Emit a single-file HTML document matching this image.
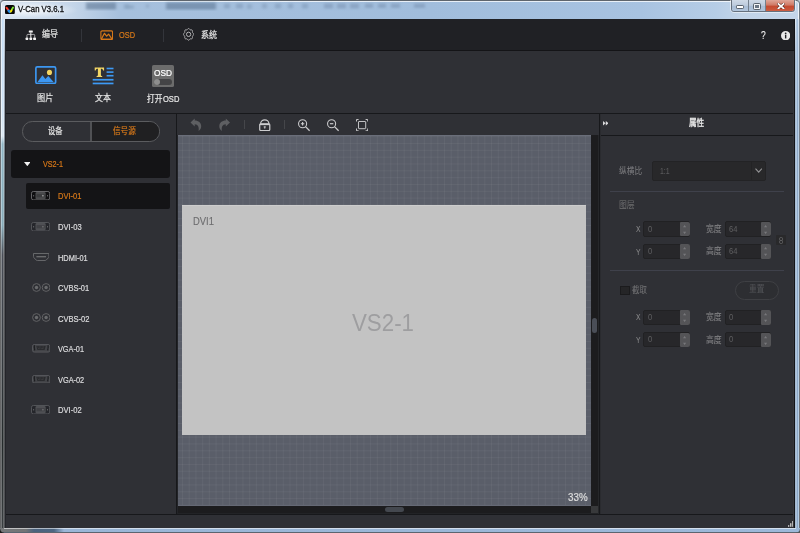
<!DOCTYPE html>
<html lang="zh"><head><meta charset="utf-8"><title>V-Can V3.6.1</title>
<style>
html,body{margin:0;padding:0}
body{width:800px;height:533px;overflow:hidden;position:relative;background:#c6d1db;font-family:"Liberation Sans",sans-serif}
.b,.t,.ic,.cj{position:absolute;display:block}
.t{white-space:nowrap;transform-origin:0 50%;-webkit-text-stroke:.22px currentColor}
.cj{overflow:visible}
.zh{font-family:"Liberation Sans","Noto Sans CJK SC",sans-serif}
#frame{position:absolute;left:0;top:0;width:800px;height:533px;box-sizing:border-box;border:1px solid #6f7780;border-top-color:#5e656d;border-radius:4px 4px 4px 4px;
 background:linear-gradient(90deg,#d9e4f0 0px,#c5d6e9 70px,#a6c0dd 120px,#a1bddc 430px,#a8c3e1 640px,#b6cde6 715px,#c2d4e8 740px,#c4d5e9 800px);
 box-shadow:inset 0 0 0 1px rgba(255,255,255,.75)}
#glow{position:absolute;left:2px;top:2px;width:75px;height:16px;background:radial-gradient(ellipse at 40% 50%,rgba(255,255,255,.85),rgba(255,255,255,0) 72%)}
#client{position:absolute;left:5px;top:19px;width:790px;height:508.5px;background:#2f3035}
#capbtns{position:absolute;left:731px;top:0;width:64px;height:12.4px;border:1px solid #66717e;border-top:none;border-radius:0 0 3.5px 3.5px;box-sizing:border-box;overflow:hidden;
 box-shadow:0 0 0 1px rgba(255,255,255,.5)}
.cb{position:absolute;top:0;height:12px}
.mn{left:0;width:16.4px;background:linear-gradient(#cfdae7,#bccbdd 45%,#a9bdd5 52%,#b3c7de);border-right:1px solid #73808e}
.mx{left:17.4px;width:15.6px;background:linear-gradient(#cfdae7,#bccbdd 45%,#a9bdd5 52%,#b3c7de);border-right:1px solid #73808e}
.cl{left:34px;width:29px;background:linear-gradient(#dfa698,#d07a66 42%,#c44a30 52%,#c9553a 80%,#d0694f)}
.mn i{position:absolute;left:4.6px;top:6.1px;width:6.6px;height:2px;background:#fff;border:1px solid #59636e;border-radius:1.2px;box-sizing:content-box;margin:-1px}
.mx i{position:absolute;left:4.6px;top:4.4px;width:6px;height:4.2px;border:1.3px solid #f4f6f8;outline:1px solid #59636e;background:#6b7785;box-sizing:border-box;border-radius:.6px}
.grid{background-color:#5a5e69;
 background-image:linear-gradient(90deg,rgba(255,255,255,.045) 0,rgba(255,255,255,.045) 1px,transparent 1px),linear-gradient(180deg,rgba(255,255,255,.045) 0,rgba(255,255,255,.045) 1px,transparent 1px);
 background-size:6.727px 100%,100% 6.83px;background-position:4px 0,0 1.2px;box-shadow:inset 0 1px 0 #6a6e7a, inset 0 -1px 0 #656975}
</style></head>
<body>
<div id="frame"></div>
<div class="b" style="left:0px;top:19px;width:1px;height:509px;background:linear-gradient(180deg,#7c848d 0px,#6d7074 121px,#6a6b6c 281px,#636465 509px)"></div>
<div class="b" style="left:1px;top:19px;width:1px;height:509px;background:linear-gradient(180deg,#e8f0f8 0px,#eef5fb 117px,#b8d3df 125px,#b2cbd6 206px,#8a8d92 236px,#6f7273 425px,#747678 509px)"></div>
<div class="b" style="left:2px;top:19px;width:1px;height:509px;background:linear-gradient(180deg,#c6def6 0px,#cfe3f6 91px,#dce8f3 117px,#8fb4c4 125px,#88abb9 206px,#4a4e57 236px,#252a2b 425px,#3a3e40 509px)"></div>
<div class="b" style="left:3px;top:19px;width:1px;height:509px;background:linear-gradient(180deg,#cde2f7 0px,#dbe9f6 91px,#e6f0f8 117px,#a9c5d0 125px,#a0bcc6 206px,#77797e 236px,#5e6263 425px,#66696b 509px)"></div>
<div class="b" style="left:4px;top:19px;width:1px;height:509px;background:linear-gradient(180deg,#dfe9f3 0px,#a8b2be 41px,#8a939e 117px,#7d8790 125px,#555659 236px,#505154 509px)"></div>
<div class="b" style="left:795px;top:19px;width:1px;height:509px;background:linear-gradient(180deg,#dde7f1 0px,#a9bdd3 41px,#a3b8cf 509px)"></div>
<div class="b" style="left:796px;top:19px;width:1px;height:509px;background:linear-gradient(180deg,#b6cce4 0px,#a9c0d9 509px)"></div>
<div class="b" style="left:797px;top:19px;width:1px;height:509px;background:linear-gradient(180deg,#a7c0dc 0px,#8ea9c8 101px,#8aa6c6 509px)"></div>
<div class="b" style="left:798px;top:19px;width:1px;height:509px;background:linear-gradient(180deg,#d8e4f1 0px,#b9cfe6 81px,#b3cce4 509px)"></div>
<div class="b" style="left:799px;top:19px;width:1px;height:509px;background:linear-gradient(180deg,#77818c 0px,#6d6f73 509px)"></div>
<div class="b" style="left:0;top:527.5px;width:800px;height:5.5px;background:linear-gradient(90deg,#77797b 0,#727476 26px,#4b627d 34px,#4d6682 54px,#9ab6d7 64px,#9cb8d9 100%)"></div>
<div class="b" style="left:4px;top:527.5px;width:792px;height:1px;background:rgba(255,255,255,.55)"></div>
<div class="b" style="left:0;top:532px;width:800px;height:1px;background:#5b6570"></div>
<div class="b" style="left:0;top:529px;width:4px;height:4px;background:radial-gradient(circle at 100% 0,rgba(30,30,30,0) 3.2px,#1c1c1c 4.2px)"></div>
<div class="b" style="left:796px;top:529px;width:4px;height:4px;background:radial-gradient(circle at 0 0,rgba(80,80,80,0) 3.2px,#55585c 4.2px)"></div>
<div id="glow"></div>
<svg class="ic" style="left:0;top:0;width:800px;height:19px" viewBox="0 0 800 19"><defs><filter id="bl" x="-5%%" y="-50%%" width="110%%" height="200%%"><feGaussianBlur stdDeviation="1.6 1.1"/></filter></defs><g fill="#5d7795" filter="url(#bl)"><rect x="86" y="2.5" width="30" height="7" opacity="0.62"/><rect x="124" y="4" width="5" height="5" opacity="0.3"/><rect x="128" y="5" width="6" height="4" opacity="0.25"/><rect x="146" y="4" width="3" height="4" opacity="0.25"/><rect x="166" y="2.5" width="50" height="7" opacity="0.6"/><rect x="224" y="3.5" width="6" height="5" opacity="0.3"/><rect x="236" y="3.5" width="7" height="5" opacity="0.3"/><rect x="247" y="4" width="5" height="5" opacity="0.25"/><rect x="262" y="3.5" width="5" height="5" opacity="0.28"/><rect x="275" y="3.5" width="6" height="5" opacity="0.3"/><rect x="288" y="3.5" width="5" height="5" opacity="0.3"/><rect x="302" y="3.5" width="6" height="5" opacity="0.3"/><rect x="324" y="3.5" width="9" height="5" opacity="0.33"/><rect x="337" y="3.5" width="9" height="5" opacity="0.33"/><rect x="350" y="3.5" width="9" height="5" opacity="0.33"/><rect x="365" y="3.5" width="8" height="4.5" opacity="0.33"/><rect x="378" y="3.5" width="8" height="4.5" opacity="0.33"/><rect x="391" y="3.5" width="9" height="4.5" opacity="0.33"/><rect x="414" y="3.5" width="11" height="4.5" opacity="0.33"/></g></svg>
<svg class="ic" style="left:5.2px;top:4.6px;width:9.8px;height:9.4px" viewBox="0 0 10 10" preserveAspectRatio="none"><rect x="0" y="0" width="10" height="10" rx="1.9" fill="#070708"/><path d="M1.5 2.8 L3.5 5.4" stroke="#ff3a26" stroke-width="2" stroke-linecap="round"/><path d="M3.7 6 L4.9 7.4" stroke="#1f8df0" stroke-width="2.5" stroke-linecap="round"/><path d="M6.9 4.9 L8.2 2.7" stroke="#7ee838" stroke-width="1.9" stroke-linecap="round"/><path d="M5.9 7 L6.6 5.8" stroke="#f3e500" stroke-width="2.1" stroke-linecap="round"/></svg>
<span class="t" style="left:18.00px;top:3.71px;font-size:9.20px;line-height:11px;color:#101215;transform:scaleX(0.8406);-webkit-text-stroke:.35px #101215;">V-Can V3.6.1</span>
<div id="capbtns"><div class="cb mn"><i></i></div><div class="cb mx"><i></i></div><div class="cb cl"><svg viewBox="0 0 10 8" style="position:absolute;left:10.6px;top:2.7px;width:8px;height:6.4px"><path d="M1.8 1.2 L8.2 6.8 M8.2 1.2 L1.8 6.8" stroke="#5a2a22" stroke-width="3.6" stroke-linecap="square"/><path d="M1.8 1.2 L8.2 6.8 M8.2 1.2 L1.8 6.8" stroke="#fff" stroke-width="2.2" stroke-linecap="square"/></svg></div></div>
<div id="client">
</div>
<div class="b nav" style="left:5.00px;top:19.00px;width:790.00px;height:32.00px;background:#202125;border-bottom:1px solid #141417;box-sizing:border-box"></div>
<svg class="ic" style="left:25px;top:29.5px;width:12px;height:10.5px" viewBox="0 0 12 10.5" fill="#f4f4f4"><path d="M1.95 7.6 V5.3 Q1.95 4.4 2.85 4.4 H8.8 Q9.7 4.4 9.7 5.3 V7.6" fill="none" stroke="#b9b9bb" stroke-width=".9"/><rect x="3.8" y=".5" width="4" height="2" rx=".5"/><rect x="5.35" y="2.3" width=".95" height="5.4"/><rect x=".6" y="7.5" width="2.6" height="2.6" rx=".7"/><rect x="4.5" y="7.5" width="2.6" height="2.6" rx=".7"/><rect x="8.2" y="7.5" width="2.8" height="2.6" rx=".7"/></svg>
<span class="t zh" style="left:42.30px;top:30.40px;font-size:9.11px;line-height:9.11px;color:#e6e6e6;transform:scaleX(0.875);-webkit-text-stroke:.2px currentColor;">编导</span>
<div class="b" style="left:81.00px;top:28.50px;width:1.00px;height:13.00px;background:#33353b"></div>
<svg class="ic" style="left:99.6px;top:29.5px;width:13.4px;height:10.5px" viewBox="0 0 13.5 11" preserveAspectRatio="none" fill="none" stroke="#d67819"><rect x=".9" y=".9" width="11.7" height="9.2" rx="1.2" stroke-width="1.1"/><path d="M1.4 9.4 L4.5 3.5 L6.7 6.5 L8.7 4.3 L12.1 9.4" stroke-width="1.25" stroke-linejoin="round"/><path d="M1.5 9.6 H12" stroke-width="1.3"/></svg>
<span class="t" style="left:119.30px;top:29.82px;font-size:8.90px;line-height:11px;color:#d67819;transform:scaleX(0.8296);">OSD</span>
<div class="b" style="left:163.00px;top:28.50px;width:1.00px;height:13.00px;background:#33353b"></div>
<svg class="ic" style="left:183px;top:28.45px;width:11.2px;height:12.7px" viewBox="-6 -6.7 12 13.4" preserveAspectRatio="none" fill="none" stroke="#b4b4b6" stroke-width="1.05"><path d="M0.00 -6.21 L0.35 -6.13 L0.68 -5.91 L0.98 -5.59 L1.24 -5.26 L1.48 -4.98 L1.74 -4.79 L2.04 -4.71 L2.39 -4.71 L2.78 -4.74 L3.18 -4.73 L3.55 -4.62 L3.85 -4.39 L4.05 -4.05 L4.15 -3.63 L4.16 -3.17 L4.14 -2.72 L4.13 -2.32 L4.20 -1.98 L4.37 -1.69 L4.61 -1.41 L4.90 -1.11 L5.18 -0.78 L5.38 -0.40 L5.45 -0.00 L5.38 0.40 L5.18 0.78 L4.90 1.11 L4.61 1.41 L4.37 1.69 L4.20 1.98 L4.13 2.32 L4.14 2.72 L4.16 3.17 L4.15 3.63 L4.05 4.05 L3.85 4.39 L3.55 4.62 L3.18 4.73 L2.78 4.74 L2.39 4.71 L2.04 4.71 L1.74 4.79 L1.48 4.98 L1.24 5.26 L0.98 5.59 L0.68 5.91 L0.35 6.13 L0.00 6.21 L-0.35 6.13 L-0.68 5.91 L-0.98 5.59 L-1.24 5.26 L-1.48 4.98 L-1.74 4.79 L-2.04 4.71 L-2.39 4.71 L-2.78 4.74 L-3.18 4.73 L-3.55 4.62 L-3.85 4.39 L-4.05 4.05 L-4.15 3.63 L-4.16 3.17 L-4.14 2.72 L-4.13 2.32 L-4.20 1.98 L-4.37 1.69 L-4.61 1.41 L-4.90 1.11 L-5.18 0.78 L-5.38 0.40 L-5.45 0.00 L-5.38 -0.40 L-5.18 -0.78 L-4.90 -1.11 L-4.61 -1.41 L-4.37 -1.69 L-4.20 -1.98 L-4.13 -2.32 L-4.14 -2.72 L-4.16 -3.17 L-4.15 -3.63 L-4.05 -4.05 L-3.85 -4.39 L-3.55 -4.62 L-3.18 -4.73 L-2.78 -4.74 L-2.39 -4.71 L-2.04 -4.71 L-1.74 -4.79 L-1.48 -4.98 L-1.24 -5.26 L-0.98 -5.59 L-0.68 -5.91 L-0.35 -6.13 Z" stroke-linejoin="round"/><circle r="2.3"/></svg>
<span class="t zh" style="left:200.60px;top:30.50px;font-size:9.12px;line-height:9.12px;color:#e6e6e6;transform:scaleX(0.883);-webkit-text-stroke:.2px currentColor;">系统</span>
<span class="t" style="left:761.20px;top:29.80px;font-size:10.40px;line-height:12px;color:#efefef;transform:scaleX(0.8126);-webkit-text-stroke:.12px;">?</span>
<svg class="ic" style="left:780.5px;top:30.7px;width:9.3px;height:9.3px" viewBox="0 0 10 10"><circle cx="5" cy="5" r="5" fill="#e9e9e9"/><rect x="4.25" y="4" width="1.5" height="4" fill="#202125"/><circle cx="5" cy="2.5" r=".95" fill="#202125"/></svg>
<div class="b" style="left:5.00px;top:51.00px;width:790.00px;height:63.00px;background:#2f3035;border-bottom:1px solid #17181b;box-sizing:border-box"></div>
<svg class="ic" style="left:35px;top:66.2px;width:21.5px;height:18.3px" viewBox="0 0 22 18.6" preserveAspectRatio="none"><rect x=".9" y=".9" width="20.2" height="16.8" rx="1.4" fill="none" stroke="#3c97f2" stroke-width="1.7"/><circle cx="14.8" cy="6.5" r="2.6" fill="#f3d460"/><path d="M2.6 16.2 L7.6 9.3 L10.6 13.2 L13.6 10.2 L19 16.2 Z" fill="#3c97f2"/></svg>
<span class="t zh" style="left:37.10px;top:93.50px;font-size:9.01px;line-height:9.01px;color:#e6e6e6;transform:scaleX(0.903);-webkit-text-stroke:.2px currentColor;">图片</span>
<svg class="ic" style="left:92.4px;top:66.8px;width:22px;height:18px" viewBox="0 0 22 18"><g fill="#3d9af5"><rect x="14.6" y=".7" width="6.9" height="1.6"/><rect x="14.6" y="4.3" width="6.9" height="1.6"/><rect x="14.6" y="7.9" width="6.9" height="1.6"/><rect x=".7" y="11.9" width="20.8" height="1.7"/><rect x=".7" y="15.6" width="20.8" height="1.7"/></g><path fill="#f3d665" transform="translate(.5 0)" d="M2.2 .4 H11.6 V3.6 H10.6 C10.4 2.4 10 1.8 8.4 1.8 V7.9 C8.4 8.7 8.8 8.9 9.7 9 V10 H4.1 V9 C5 8.9 5.4 8.7 5.4 7.9 V1.8 C3.8 1.8 3.4 2.4 3.2 3.6 H2.2 Z"/></svg>
<span class="t zh" style="left:95.20px;top:94.40px;font-size:8.85px;line-height:8.85px;color:#e6e6e6;transform:scaleX(0.896);-webkit-text-stroke:.2px currentColor;">文本</span>
<div class="b" style="left:152px;top:64.8px;width:22px;height:21.9px;background:#6c6c6c;border-radius:1.6px"></div>
<span class="t" style="left:153.90px;top:68.19px;font-size:8.70px;line-height:10px;color:#ffffff;transform:scaleX(0.9547);">OSD</span>
<div class="b" style="left:153.6px;top:78.7px;width:18.9px;height:6.6px;background:#444446;border-radius:3.3px"></div>
<div class="b" style="left:153.8px;top:78.9px;width:6.2px;height:6.2px;background:#8e8e8e;border-radius:50%"></div>
<span class="t zh" style="left:146.90px;top:94.50px;font-size:8.98px;line-height:8.98px;color:#e6e6e6;transform:scaleX(0.863);-webkit-text-stroke:.2px currentColor;">打开</span>
<span class="t" style="left:162.50px;top:94.42px;font-size:8.90px;line-height:11px;color:#e6e6e6;transform:scaleX(0.8503);">OSD</span>
<div class="b" style="left:5.00px;top:114.00px;width:171.00px;height:400.00px;background:#2f3035"></div>
<div class="b" style="left:176.00px;top:114.00px;width:1.00px;height:400.00px;background:#17181b"></div>
<div class="b" style="left:22px;top:121px;width:137.5px;height:20.5px;border:1px solid #5b5c5f;border-radius:10.25px;box-sizing:border-box;overflow:hidden;background:#2f3035"><div style="position:absolute;left:67px;top:0;width:2px;height:20px;background:#505154"></div><div style="position:absolute;left:69px;top:0;width:70px;height:20px;background:#202022"></div></div>
<span class="t zh" style="left:48.40px;top:127.20px;font-size:8.86px;line-height:8.86px;color:#e6e6e6;transform:scaleX(0.819);-webkit-text-stroke:.2px currentColor;">设备</span>
<span class="t zh" style="left:113.00px;top:127.25px;font-size:8.78px;line-height:8.78px;color:#d67819;transform:scaleX(0.869);-webkit-text-stroke:.2px currentColor;">信号源</span>
<div class="b" style="left:11.30px;top:149.50px;width:158.40px;height:28.60px;background:#141416;border-radius:3px"></div>
<svg class="ic" style="left:23.6px;top:161.8px;width:6.6px;height:4.2px" viewBox="0 0 6.6 4.2"><path d="M0 0 H6.6 L3.3 4.2 Z" fill="#f2f2f2"/></svg>
<span class="t" style="left:42.50px;top:158.52px;font-size:8.90px;line-height:11px;color:#d67819;transform:scaleX(0.8085);">VS2-1</span>
<div class="b" style="left:26.30px;top:183.20px;width:143.40px;height:25.50px;background:#141416;border-radius:2px"></div>
<svg class="ic" style="left:30.8px;top:190.80px;width:19.2px;height:9.4px" viewBox="0 0 19.2 9.4"><rect x=".5" y=".5" width="18.2" height="8.4" rx="1.8" fill="#0e0e10" stroke="#707173" stroke-width=".9"/><rect x="4.5" y="1" width="10.2" height="7.4" rx="1.4" fill="#4a4b4d"/><rect x="5.5" y="3.1" width="8.2" height="3.2" fill="#3a3b3d"/><circle cx="11.9" cy="4.7" r=".85" fill="#9a9b9d"/><rect x="2.2" y="4.1" width=".9" height="1.3" fill="#707173"/><rect x="16.1" y="4.1" width=".9" height="1.3" fill="#707173"/></svg>
<span class="t" style="left:57.80px;top:191.28px;font-size:9.00px;line-height:11px;color:#d67819;transform:scaleX(0.8354);">DVI-01</span>
<svg class="ic" style="left:30.8px;top:221.60px;width:19.2px;height:9.4px" viewBox="0 0 19.2 9.4"><rect x=".5" y=".5" width="18.2" height="8.4" rx="1.8" fill="#25262b" stroke="#58595d" stroke-width=".9"/><rect x="4.5" y="1" width="10.2" height="7.4" rx="1.4" fill="#4f5054"/><rect x="5.5" y="3.1" width="8.2" height="3.2" fill="#404145"/><circle cx="11.9" cy="4.7" r=".85" fill="#6c6d70"/><rect x="2.2" y="4.1" width=".9" height="1.3" fill="#707173"/><rect x="16.1" y="4.1" width=".9" height="1.3" fill="#707173"/></svg>
<span class="t" style="left:57.80px;top:221.88px;font-size:9.00px;line-height:11px;color:#dadadc;transform:scaleX(0.8425);">DVI-03</span>
<svg class="ic" style="left:32.8px;top:252.80px;width:16.4px;height:8px" viewBox="0 0 16.4 8" fill="none" stroke="#6d6e70"><path d="M.5 .5 H15.9 V3.6 Q15.9 4.4 15.2 5 L13.4 6.9 Q12.8 7.5 12 7.5 H4.4 Q3.6 7.5 3 6.9 L1.2 5 Q.5 4.4 .5 3.6 Z" stroke-width=".9"/><path d="M3.4 3.7 H13" stroke-width="1.3"/></svg>
<span class="t" style="left:57.80px;top:252.58px;font-size:9.00px;line-height:11px;color:#dadadc;transform:scaleX(0.8249);">HDMI-01</span>
<svg class="ic" style="left:31.8px;top:282.90px;width:18.6px;height:9px" viewBox="0 0 18.6 9" fill="none" stroke="#666769"><circle cx="4.5" cy="4.5" r="3.9" stroke-width=".9"/><circle cx="14.1" cy="4.5" r="3.9" stroke-width=".9"/><circle cx="4.5" cy="4.5" r="1.7" fill="#6a6b6d" stroke="none"/><circle cx="14.1" cy="4.5" r="1.7" fill="#6a6b6d" stroke="none"/></svg>
<span class="t" style="left:57.80px;top:283.08px;font-size:9.00px;line-height:11px;color:#dadadc;transform:scaleX(0.8316);">CVBS-01</span>
<svg class="ic" style="left:31.8px;top:313.40px;width:18.6px;height:9px" viewBox="0 0 18.6 9" fill="none" stroke="#666769"><circle cx="4.5" cy="4.5" r="3.9" stroke-width=".9"/><circle cx="14.1" cy="4.5" r="3.9" stroke-width=".9"/><circle cx="4.5" cy="4.5" r="1.7" fill="#6a6b6d" stroke="none"/><circle cx="14.1" cy="4.5" r="1.7" fill="#6a6b6d" stroke="none"/></svg>
<span class="t" style="left:57.80px;top:313.58px;font-size:9.00px;line-height:11px;color:#dadadc;transform:scaleX(0.8369);">CVBS-02</span>
<svg class="ic" style="left:31.6px;top:344.00px;width:18.4px;height:8.6px" viewBox="0 0 18.4 8.6"><rect x=".5" y=".5" width="17.4" height="7.6" rx="1.7" fill="#434448" stroke="#58595d" stroke-width=".9"/><path d="M4.3 1.9 H13.7 L12.6 5.9 H5.4 Z" fill="#2a2b2e"/><path d="M5.6 3 H12.4 M6 4.6 H12" stroke="#4a4b4f" stroke-width=".7" stroke-dasharray=".8 .6"/><path d="M2.3 1.7 V3.9 M2.6 4.9 V5.9 M16.1 1.7 V3.9 M15.8 4.9 V5.9" stroke="#1c1d20" stroke-width="1.2" stroke-linecap="round"/></svg>
<span class="t" style="left:57.80px;top:344.08px;font-size:9.00px;line-height:11px;color:#dadadc;transform:scaleX(0.8121);">VGA-01</span>
<svg class="ic" style="left:31.6px;top:374.50px;width:18.4px;height:8.6px" viewBox="0 0 18.4 8.6"><rect x=".5" y=".5" width="17.4" height="7.6" rx="1.7" fill="#434448" stroke="#58595d" stroke-width=".9"/><path d="M4.3 1.9 H13.7 L12.6 5.9 H5.4 Z" fill="#2a2b2e"/><path d="M5.6 3 H12.4 M6 4.6 H12" stroke="#4a4b4f" stroke-width=".7" stroke-dasharray=".8 .6"/><path d="M2.3 1.7 V3.9 M2.6 4.9 V5.9 M16.1 1.7 V3.9 M15.8 4.9 V5.9" stroke="#1c1d20" stroke-width="1.2" stroke-linecap="round"/></svg>
<span class="t" style="left:57.80px;top:374.58px;font-size:9.00px;line-height:11px;color:#dadadc;transform:scaleX(0.8184);">VGA-02</span>
<svg class="ic" style="left:30.8px;top:404.80px;width:19.2px;height:9.4px" viewBox="0 0 19.2 9.4"><rect x=".5" y=".5" width="18.2" height="8.4" rx="1.8" fill="#25262b" stroke="#58595d" stroke-width=".9"/><rect x="4.5" y="1" width="10.2" height="7.4" rx="1.4" fill="#4f5054"/><rect x="5.5" y="3.1" width="8.2" height="3.2" fill="#404145"/><circle cx="11.9" cy="4.7" r=".85" fill="#6c6d70"/><rect x="2.2" y="4.1" width=".9" height="1.3" fill="#707173"/><rect x="16.1" y="4.1" width=".9" height="1.3" fill="#707173"/></svg>
<span class="t" style="left:57.80px;top:405.08px;font-size:9.00px;line-height:11px;color:#dadadc;transform:scaleX(0.8425);">DVI-02</span>
<div class="b" style="left:177.00px;top:114.00px;width:422.00px;height:21.00px;background:#2f3035"></div>
<div class="b" style="left:177.00px;top:135.00px;width:1.00px;height:379.00px;background:#232428"></div>
<div class="b grid" style="left:178.00px;top:135.00px;width:413.00px;height:371.00px;"></div>
<div class="b" style="left:591.00px;top:135.00px;width:7.00px;height:371.00px;background:#1c1c1e"></div>
<div class="b" style="left:178.00px;top:506.00px;width:413.00px;height:7.30px;background:#1c1c1e"></div>
<div class="b" style="left:591.00px;top:506.00px;width:7.00px;height:7.30px;background:#38393b"></div>
<div class="b" style="left:177.00px;top:513.30px;width:422.00px;height:1.70px;background:#222326"></div>
<div class="b" style="left:598.00px;top:135.00px;width:1.00px;height:379.00px;background:#26272a"></div>
<div class="b" style="left:599.00px;top:114.00px;width:1.00px;height:400.00px;background:#17181b"></div>
<div class="b" style="left:591.80px;top:317.80px;width:5.60px;height:15.00px;background:#4a4e57;border-radius:2.8px"></div>
<div class="b" style="left:385.00px;top:507.00px;width:18.60px;height:5.30px;background:#44484f;border-radius:2.7px"></div>
<div class="b" style="left:182.00px;top:204.70px;width:404.00px;height:230.20px;background:#c3c3c3;border-top:1px solid #cdcdcd;box-sizing:border-box"></div>
<span class="t" style="left:193.00px;top:214.82px;font-size:10.90px;line-height:13px;color:#6c6c6e;transform:scaleX(0.8666);-webkit-text-stroke:.1px;">DVI1</span>
<span class="t" style="left:352.20px;top:308.72px;font-size:23.60px;line-height:28px;color:#9e9ea0;transform:scaleX(0.9452);-webkit-text-stroke:0;">VS2-1</span>
<span class="t" style="left:568.00px;top:490.83px;font-size:10.60px;line-height:13px;color:#dcdcdc;transform:scaleX(0.9238);">33%</span>
<svg class="ic" style="left:190px;top:118px;width:11.5px;height:13.2px" viewBox="0 0 11.5 13.2"><path d="M.5 4.45 L4.7 .4 V2.6 C8.6 2.6 11.2 5 11.2 8.2 C11.2 10.2 10.2 12 8.6 12.9 C9.2 9.5 8.2 6.4 4.7 6.3 V8.4 Z" fill="#5e5f62"/></svg>
<svg class="ic" style="left:219px;top:118px;width:11.5px;height:13.2px" viewBox="0 0 11.5 13.2"><path transform="translate(11.5 0) scale(-1 1)" d="M.5 4.45 L4.7 .4 V2.6 C8.6 2.6 11.2 5 11.2 8.2 C11.2 10.2 10.2 12 8.6 12.9 C9.2 9.5 8.2 6.4 4.7 6.3 V8.4 Z" fill="#5e5f62"/></svg>
<div class="b" style="left:244.00px;top:120.00px;width:1.00px;height:9.40px;background:#45464a"></div>
<svg class="ic" style="left:259.2px;top:118.6px;width:11.5px;height:12.6px" viewBox="0 0 12 12.6" fill="none" stroke="#cdcdcf"><path d="M1.7 4.8 V4.5 A4.3 3.9 0 0 1 10.3 4.5 V4.8" stroke-width="1.25"/><rect x=".75" y="4.7" width="10.5" height="7.1" rx="1" stroke-width="1.25"/><path d="M.8 5.4 H11.2" stroke-width="1.5"/><path d="M6 7.6 V9.8 M4.9 8 H7.1" stroke-width="1"/></svg>
<div class="b" style="left:284.00px;top:120.00px;width:1.00px;height:9.40px;background:#45464a"></div>
<svg class="ic" style="left:297.8px;top:118.6px;width:13px;height:13px" viewBox="0 0 13 13" fill="none" stroke="#cdcdcf"><circle cx="4.6" cy="4.7" r="4.05" stroke-width="1.05"/><path d="M7.5 7.6 L11.6 11.7" stroke-width="1.25"/><path d="M2.9 4.7 H6.3 M4.6 3 V6.4" stroke-width="1.15"/></svg>
<svg class="ic" style="left:326.8px;top:118.7px;width:13px;height:13px" viewBox="0 0 13 13" fill="none" stroke="#cdcdcf"><circle cx="4.6" cy="4.7" r="4.05" stroke-width="1.05"/><path d="M7.5 7.6 L11.6 11.7" stroke-width="1.25"/><path d="M2.9 4.7 H6.3" stroke-width="1.15"/></svg>
<svg class="ic" style="left:355.9px;top:118.9px;width:12.2px;height:12.2px" viewBox="0 0 12.2 12.2" fill="none" stroke="#c4c4c6"><path d="M.5 2.6 V1.2 Q.5 .5 1.2 .5 H2.6 M9.6 .5 H11 Q11.7 .5 11.7 1.2 V2.6 M11.7 9.6 V11 Q11.7 11.7 11 11.7 H9.6 M2.6 11.7 H1.2 Q.5 11.7 .5 11 V9.6" stroke-width="1.05"/><rect x="2.5" y="2.5" width="7.2" height="7.2" rx=".4" stroke-width="1"/></svg>
<div class="b" style="left:600.00px;top:114.00px;width:195.00px;height:400.00px;background:#2f3035"></div>
<div class="b" style="left:600.00px;top:135.00px;width:195.00px;height:1.00px;background:#17181b"></div>
<div class="b" style="left:600.00px;top:114.00px;width:1.00px;height:400.00px;background:#2a2b2f"></div>
<svg class="ic" style="left:602.6px;top:121.3px;width:5.6px;height:4.6px" viewBox="0 0 5.6 4.6" fill="#d9d9db"><path d="M0 0 L2.6 2.3 L0 4.6 Z M2.8 0 L5.6 2.3 L2.8 4.6 Z"/></svg>
<span class="t zh" style="left:689.30px;top:119.25px;font-size:8.79px;line-height:8.79px;color:#e6e6e6;transform:scaleX(0.866);-webkit-text-stroke:.35px currentColor;">属性</span>
<span class="t zh" style="left:618.90px;top:166.50px;font-size:9.00px;line-height:9.00px;color:#7e7e80;transform:scaleX(0.856);-webkit-text-stroke:.05px currentColor;">纵横比</span>
<div class="b" style="left:652.00px;top:161.20px;width:113.50px;height:19.60px;background:#28282a;border:1px solid #232325;border-radius:2px;box-sizing:border-box"></div>
<div class="b" style="left:751.00px;top:162.00px;width:1.00px;height:17.60px;background:#232325"></div>
<svg class="ic" style="left:754.6px;top:168.4px;width:7.4px;height:5px" viewBox="0 0 7.4 5" fill="none" stroke="#949496" stroke-width="1.1"><path d="M.5 .6 L3.7 4.1 L6.9 .6"/></svg>
<span class="t" style="left:659.50px;top:166.25px;font-size:8.50px;line-height:10px;color:#5a5a5c;transform:scaleX(0.8124);-webkit-text-stroke:.1px;">1:1</span>
<div class="b" style="left:610.00px;top:190.60px;width:174.00px;height:1.00px;background:#3f414b"></div>
<span class="t zh" style="left:619.30px;top:200.70px;font-size:9.38px;line-height:9.38px;color:#6c6c6e;transform:scaleX(0.837);-webkit-text-stroke:.05px currentColor;">图层</span>
<span class="t" style="left:635.60px;top:224.22px;font-size:8.60px;line-height:10px;color:#868688;transform:scaleX(0.7845);-webkit-text-stroke:.05px;">X</span>
<div class="b" style="left:643.10px;top:221.20px;width:47.00px;height:15.60px;background:#27272a;border:1px solid #212123;border-radius:2px;box-sizing:border-box"></div>
<div class="b" style="left:679.80px;top:221.80px;width:9.90px;height:14.50px;background:#545457;border-radius:1px 2px 2px 1px"></div>
<svg class="ic" style="left:683.10px;top:224.80px;width:3.2px;height:9px" viewBox="0 0 3.2 9" fill="#78787b"><path d="M0 2.3 L1.6 0 L3.2 2.3 Z M0 6.7 L1.6 9 L3.2 6.7 Z"/></svg>
<span class="t" style="left:647.70px;top:223.78px;font-size:9.00px;line-height:11px;color:#5c5c5e;transform:scaleX(0.8400);-webkit-text-stroke:.1px;">0</span>
<span class="t" style="left:635.60px;top:246.52px;font-size:8.60px;line-height:10px;color:#868688;transform:scaleX(0.7845);-webkit-text-stroke:.05px;">Y</span>
<div class="b" style="left:643.10px;top:243.50px;width:47.00px;height:15.60px;background:#27272a;border:1px solid #212123;border-radius:2px;box-sizing:border-box"></div>
<div class="b" style="left:679.80px;top:244.10px;width:9.90px;height:14.50px;background:#545457;border-radius:1px 2px 2px 1px"></div>
<svg class="ic" style="left:683.10px;top:247.10px;width:3.2px;height:9px" viewBox="0 0 3.2 9" fill="#78787b"><path d="M0 2.3 L1.6 0 L3.2 2.3 Z M0 6.7 L1.6 9 L3.2 6.7 Z"/></svg>
<span class="t" style="left:647.70px;top:246.08px;font-size:9.00px;line-height:11px;color:#5c5c5e;transform:scaleX(0.8400);-webkit-text-stroke:.1px;">0</span>
<span class="t zh" style="left:705.70px;top:224.80px;font-size:8.68px;line-height:8.68px;color:#868688;transform:scaleX(0.900);-webkit-text-stroke:.05px currentColor;">宽度</span>
<div class="b" style="left:724.80px;top:221.20px;width:46.30px;height:15.60px;background:#27272a;border:1px solid #212123;border-radius:2px;box-sizing:border-box"></div>
<div class="b" style="left:760.80px;top:221.80px;width:9.90px;height:14.50px;background:#545457;border-radius:1px 2px 2px 1px"></div>
<svg class="ic" style="left:764.10px;top:224.80px;width:3.2px;height:9px" viewBox="0 0 3.2 9" fill="#78787b"><path d="M0 2.3 L1.6 0 L3.2 2.3 Z M0 6.7 L1.6 9 L3.2 6.7 Z"/></svg>
<span class="t" style="left:729.40px;top:223.78px;font-size:9.00px;line-height:11px;color:#5c5c5e;transform:scaleX(0.8400);-webkit-text-stroke:.1px;">64</span>
<span class="t zh" style="left:705.50px;top:247.10px;font-size:8.86px;line-height:8.86px;color:#868688;transform:scaleX(0.889);-webkit-text-stroke:.05px currentColor;">高度</span>
<div class="b" style="left:724.80px;top:243.50px;width:46.30px;height:15.60px;background:#27272a;border:1px solid #212123;border-radius:2px;box-sizing:border-box"></div>
<div class="b" style="left:760.80px;top:244.10px;width:9.90px;height:14.50px;background:#545457;border-radius:1px 2px 2px 1px"></div>
<svg class="ic" style="left:764.10px;top:247.10px;width:3.2px;height:9px" viewBox="0 0 3.2 9" fill="#78787b"><path d="M0 2.3 L1.6 0 L3.2 2.3 Z M0 6.7 L1.6 9 L3.2 6.7 Z"/></svg>
<span class="t" style="left:729.40px;top:246.08px;font-size:9.00px;line-height:11px;color:#5c5c5e;transform:scaleX(0.8400);-webkit-text-stroke:.1px;">64</span>
<div class="b" style="left:776.00px;top:235.00px;width:10.00px;height:9.60px;background:#29292b;border-radius:1px"></div>
<svg class="ic" style="left:778.9px;top:236.6px;width:4.2px;height:7px" viewBox="0 0 4 6.8" fill="none" stroke="#626264" stroke-width=".9"><rect x=".5" y=".5" width="3" height="2.9" rx="1.2"/><rect x=".5" y="3.4" width="3" height="2.9" rx="1.2"/></svg>
<div class="b" style="left:610.00px;top:269.60px;width:174.00px;height:1.00px;background:#3f414b"></div>
<div class="b" style="left:620.00px;top:285.50px;width:9.80px;height:9.60px;background:#252527;border:1px solid #1b1b1d;box-sizing:border-box"></div>
<span class="t zh" style="left:632.30px;top:285.90px;font-size:8.71px;line-height:8.71px;color:#737375;transform:scaleX(0.857);-webkit-text-stroke:.05px currentColor;">截取</span>
<div class="b" style="left:734.80px;top:280.50px;width:43.80px;height:19.20px;background:#2d2e32;border:1px solid #3f4044;border-radius:9.6px;box-sizing:border-box"></div>
<span class="t zh" style="left:748.80px;top:285.10px;font-size:9.28px;line-height:9.28px;color:#535458;transform:scaleX(0.831);-webkit-text-stroke:.04px currentColor;">重置</span>
<span class="t" style="left:635.60px;top:312.42px;font-size:8.60px;line-height:10px;color:#868688;transform:scaleX(0.7845);-webkit-text-stroke:.05px;">X</span>
<div class="b" style="left:643.10px;top:309.50px;width:47.00px;height:15.60px;background:#27272a;border:1px solid #212123;border-radius:2px;box-sizing:border-box"></div>
<div class="b" style="left:679.80px;top:310.10px;width:9.90px;height:14.50px;background:#545457;border-radius:1px 2px 2px 1px"></div>
<svg class="ic" style="left:683.10px;top:313.10px;width:3.2px;height:9px" viewBox="0 0 3.2 9" fill="#78787b"><path d="M0 2.3 L1.6 0 L3.2 2.3 Z M0 6.7 L1.6 9 L3.2 6.7 Z"/></svg>
<span class="t" style="left:647.70px;top:312.08px;font-size:9.00px;line-height:11px;color:#5c5c5e;transform:scaleX(0.8400);-webkit-text-stroke:.1px;">0</span>
<span class="t" style="left:635.60px;top:334.82px;font-size:8.60px;line-height:10px;color:#868688;transform:scaleX(0.7845);-webkit-text-stroke:.05px;">Y</span>
<div class="b" style="left:643.10px;top:331.90px;width:47.00px;height:15.60px;background:#27272a;border:1px solid #212123;border-radius:2px;box-sizing:border-box"></div>
<div class="b" style="left:679.80px;top:332.50px;width:9.90px;height:14.50px;background:#545457;border-radius:1px 2px 2px 1px"></div>
<svg class="ic" style="left:683.10px;top:335.50px;width:3.2px;height:9px" viewBox="0 0 3.2 9" fill="#78787b"><path d="M0 2.3 L1.6 0 L3.2 2.3 Z M0 6.7 L1.6 9 L3.2 6.7 Z"/></svg>
<span class="t" style="left:647.70px;top:334.48px;font-size:9.00px;line-height:11px;color:#5c5c5e;transform:scaleX(0.8400);-webkit-text-stroke:.1px;">0</span>
<span class="t zh" style="left:705.70px;top:313.10px;font-size:8.68px;line-height:8.68px;color:#868688;transform:scaleX(0.900);-webkit-text-stroke:.05px currentColor;">宽度</span>
<div class="b" style="left:724.80px;top:309.50px;width:46.30px;height:15.60px;background:#27272a;border:1px solid #212123;border-radius:2px;box-sizing:border-box"></div>
<div class="b" style="left:760.80px;top:310.10px;width:9.90px;height:14.50px;background:#545457;border-radius:1px 2px 2px 1px"></div>
<svg class="ic" style="left:764.10px;top:313.10px;width:3.2px;height:9px" viewBox="0 0 3.2 9" fill="#78787b"><path d="M0 2.3 L1.6 0 L3.2 2.3 Z M0 6.7 L1.6 9 L3.2 6.7 Z"/></svg>
<span class="t" style="left:729.40px;top:312.08px;font-size:9.00px;line-height:11px;color:#5c5c5e;transform:scaleX(0.8400);-webkit-text-stroke:.1px;">0</span>
<span class="t zh" style="left:705.50px;top:335.50px;font-size:8.86px;line-height:8.86px;color:#868688;transform:scaleX(0.889);-webkit-text-stroke:.05px currentColor;">高度</span>
<div class="b" style="left:724.80px;top:331.90px;width:46.30px;height:15.60px;background:#27272a;border:1px solid #212123;border-radius:2px;box-sizing:border-box"></div>
<div class="b" style="left:760.80px;top:332.50px;width:9.90px;height:14.50px;background:#545457;border-radius:1px 2px 2px 1px"></div>
<svg class="ic" style="left:764.10px;top:335.50px;width:3.2px;height:9px" viewBox="0 0 3.2 9" fill="#78787b"><path d="M0 2.3 L1.6 0 L3.2 2.3 Z M0 6.7 L1.6 9 L3.2 6.7 Z"/></svg>
<span class="t" style="left:729.40px;top:334.48px;font-size:9.00px;line-height:11px;color:#5c5c5e;transform:scaleX(0.8400);-webkit-text-stroke:.1px;">0</span>
<div class="b" style="left:5.00px;top:514.00px;width:790.00px;height:1.00px;background:#17181b"></div>
<div class="b" style="left:5.00px;top:515.00px;width:790.00px;height:12.50px;background:#2f3035"></div>
<svg class="ic" style="left:787.6px;top:521px;width:5.6px;height:5.8px" viewBox="0 0 5.6 5.8" fill="#cfcfcf"><rect x="0" y="4.2" width="1.3" height="1.6"/><rect x="2.1" y="2.2" width="1.3" height="3.6"/><rect x="4.2" y="0" width="1.3" height="5.8"/></svg>
<div class="b" style="left:793.00px;top:51.00px;width:1.00px;height:476.00px;background:#35363b"></div>
<div class="b" style="left:5.00px;top:19.00px;width:1.00px;height:508.50px;background:#24252a"></div>
<div class="b" style="left:794.00px;top:19.00px;width:1.00px;height:508.50px;background:#131418"></div>
</body></html>
